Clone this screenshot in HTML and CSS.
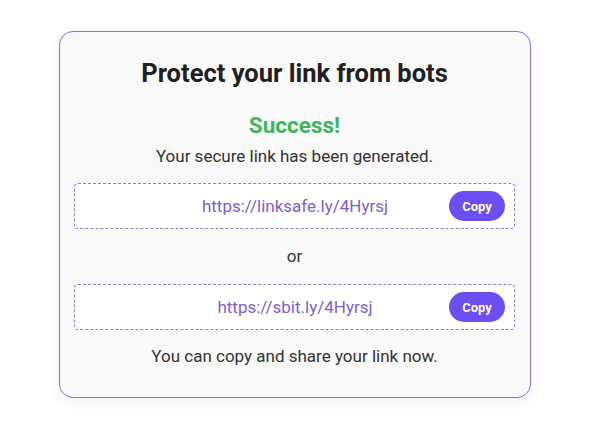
FILE: index.html
```html
<!DOCTYPE html>
<html lang="en">
<head>
<meta charset="utf-8">
<title>Protect your link</title>
<link rel="stylesheet" href="styles.css">
</head>
<body>
<div class="card">
  <h1 class="title">Protect your link from bots</h1>
  <p class="success">Success!</p>
  <p class="sub">Your secure link has been generated.</p>
  <div class="linkbox">
    <span class="url">https://linksafe.ly/4Hyrsj</span>
    <button class="copy">Copy</button>
  </div>
  <p class="or">or</p>
  <div class="linkbox second">
    <span class="url">https://sbit.ly/4Hyrsj</span>
    <button class="copy">Copy</button>
  </div>
  <p class="note">You can copy and share your link now.</p>
</div>
</body>
</html>
```

FILE: styles.css
```css
* { box-sizing: border-box; }
html, body { margin: 0; padding: 0; background: #ffffff; }
body {
  font-family: Roboto, "Liberation Sans", sans-serif;
  width: 600px;
  height: 430px;
  overflow: hidden;
}
.card {
  margin: 31px 0 0 59px;
  width: 472px;
  background: #f9f9f9;
  border: 1px solid #7f73d8;
  border-radius: 14px;
  padding: 14px 15px 30px 14px;
  box-shadow: 0 4px 14px rgba(0,0,0,0.06);
  text-align: center;
}
.title {
  margin: 13px 0 0;
  font-size: 25.5px;
  line-height: 28px;
  font-weight: 700;
  color: #202020;
}
.success {
  margin: 25px 0 0;
  font-size: 22.5px;
  line-height: 26px;
  font-weight: 700;
  color: #3cb55e;
}
.sub {
  margin: 7px 0 0;
  font-size: 17px;
  line-height: 22px;
  color: #333333;
}
.linkbox {
  margin-top: 16px;
  height: 46px;
  background: #ffffff;
  border: 1px dashed #8a80c4;
  border-radius: 4px;
  display: grid;
  grid-template-columns: 1fr auto 1fr;
  align-items: center;
  padding: 0 9px 0 10px;
}
.linkbox.second { margin-top: 17px; }
.url {
  grid-column: 2;
  font-size: 17px;
  color: #7a5fd3;
  white-space: nowrap;
}
.copy {
  grid-column: 3;
  justify-self: end;
  width: 56px;
  height: 30px;
  border: none;
  border-radius: 15px;
  background: #6c4ef2;
  color: #ffffff;
  font-family: Roboto, "Liberation Sans", sans-serif;
  font-size: 13px;
  font-weight: 700;
  padding: 0;
}
.or {
  margin: 16px 0 0;
  font-size: 17px;
  line-height: 22px;
  color: #333333;
}
.note {
  margin: 15px 0 0;
  font-size: 17px;
  line-height: 22px;
  color: #333333;
}
```
